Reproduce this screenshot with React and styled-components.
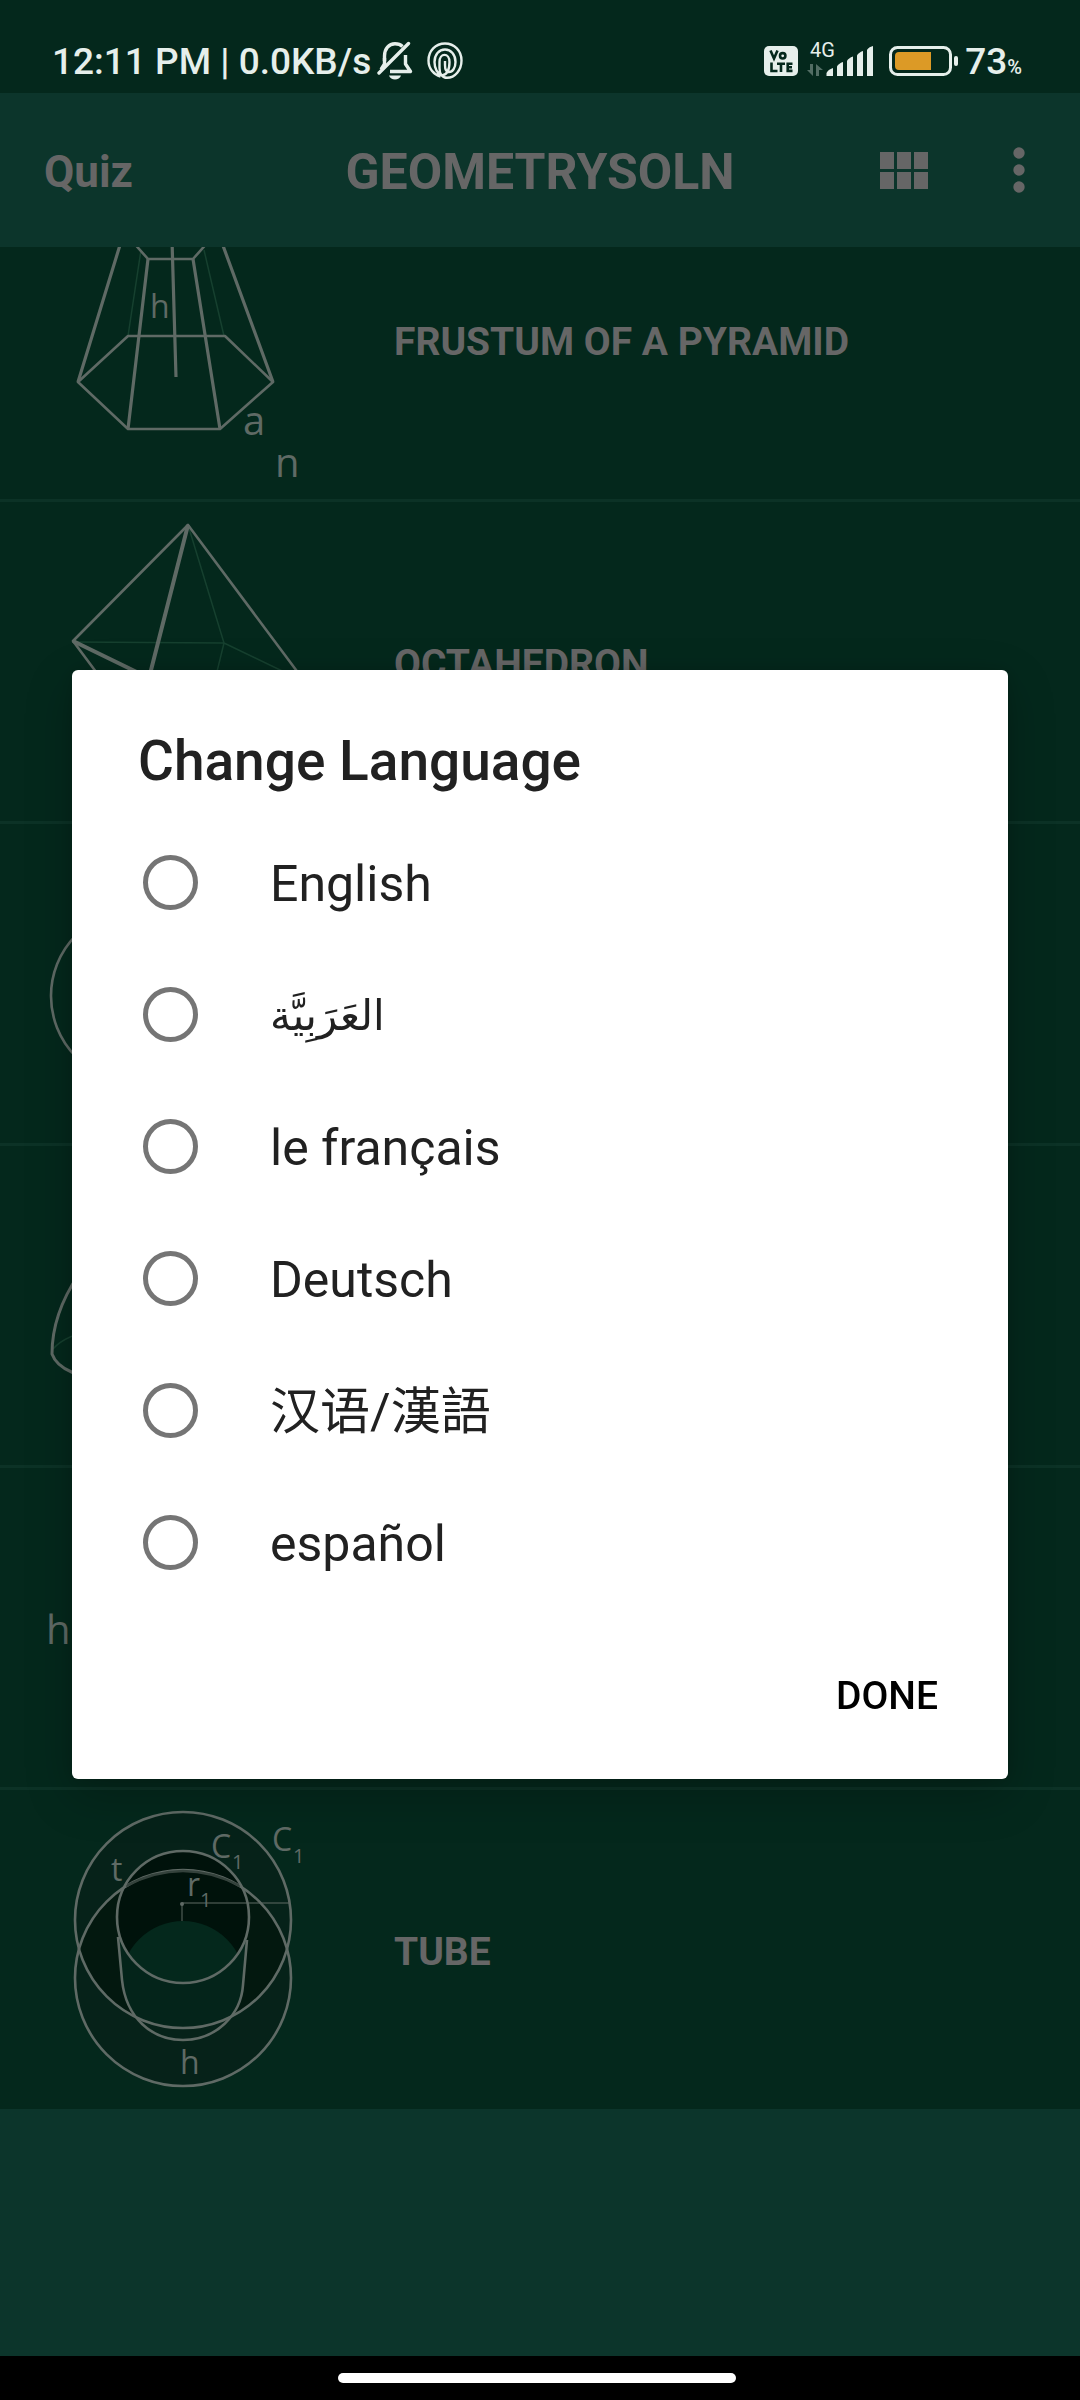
import React from "react";
import styled, { createGlobalStyle } from "styled-components";

const color = {
  board: "#04281c",
  panel: "#0c352b",
  divider: "#0c3226",
  chalk: "#666666",
  line: "#5f6a65",
  faint: "#16402f",
  status: "#e6efeb",
  ink: "#212121",
};

const GlobalStyle = createGlobalStyle`
  * { box-sizing: border-box; }
  body {
    margin: 0;
    background: ${color.panel};
    font-family: Roboto, "Noto Sans CJK SC", "DejaVu Sans", sans-serif;
  }
  button { font-family: inherit; border: 0; background: none; cursor: pointer; }
`;

const Screen = styled.div`
  display: flex;
  flex-direction: column;
  min-height: 100vh;
  background: ${color.panel};
`;

const StatusBar = styled.div`
  position: relative;
  z-index: 2;
  display: flex;
  justify-content: space-between;
  align-items: center;
  height: 93px;
  padding: 28px 58px 0 52px;
  background: ${color.board};
  color: ${color.status};
  font-size: 37px;
  font-weight: 500;
  line-height: 44px;
`;

const StatusGroup = styled.div`
  display: flex;
  align-items: center;
  gap: ${(p) => p.$gap}px;
`;

const StatusText = styled.span`
  padding-top: 3px;
`;

const Percent = styled.span`
  font-size: 20px;
  line-height: 20px;
`;

const Header = styled.header`
  position: relative;
  z-index: 2;
  display: grid;
  grid-template-columns: 1fr auto 1fr;
  align-items: center;
  height: 154px;
  padding: 2px 43px 0;
  background: ${color.panel};
  color: ${color.chalk};
`;

const QuizButton = styled.button`
  justify-self: start;
  padding: 2px 0 0 1px;
  color: inherit;
  font-size: 44px;
  font-weight: 700;
  line-height: 64px;
`;

const AppTitle = styled.h1`
  margin: 0;
  padding-top: 2px;
  font-size: 50px;
  font-weight: 700;
  line-height: 64px;
`;

const HeaderActions = styled.div`
  justify-self: end;
  display: flex;
  align-items: center;
  gap: 73px;
`;

const IconButton = styled.button`
  display: flex;
  padding: 0 0 2px;
  color: inherit;
`;

const ShapeList = styled.ul`
  display: flex;
  flex-direction: column;
  gap: 3px;
  margin: -67px 0 0;
  padding: 0;
  list-style: none;
  background: ${color.divider};
`;

const ShapeRow = styled.li`
  display: flex;
  align-items: center;
  gap: 44px;
  height: 319px;
  background: ${color.board};
  color: ${color.chalk};
`;

const ShapeName = styled.span`
  padding-top: 4px;
  font-size: 39px;
  font-weight: 700;
  line-height: 48px;
`;

const Figure = styled.svg`
  flex: none;
  width: 350px;
  height: 319px;
  fill: none;
  stroke: ${color.line};
  stroke-width: 2.6;
  stroke-linejoin: round;
`;

const FigureLabel = styled.text`
  fill: ${color.line};
  stroke: none;
  font-family: "Open Sans", "Noto Sans", sans-serif;
  font-size: ${(p) => p.$size || 32}px;
`;

const Filler = styled.div`
  flex: 1;
`;

const NavBar = styled.div`
  display: flex;
  justify-content: center;
  align-items: center;
  height: 44px;
  padding-right: 6px;
  background: #000;
`;

const HomeHandle = styled.div`
  width: 37%;
  height: 10px;
  border-radius: 5px;
  background: #fff;
`;

const Overlay = styled.div`
  position: fixed;
  inset: 0;
  z-index: 3;
  display: flex;
  align-items: center;
  padding: 93px 72px 44px;
`;

const Dialog = styled.form`
  flex: 1;
  padding: 59px 22px 17px 66px;
  border-radius: 6px;
  background: #fff;
  color: ${color.ink};
  box-shadow: 0 16px 48px rgba(0, 0, 0, 0.22), 0 0 16px rgba(0, 0, 0, 0.12);
`;

const DialogTitle = styled.h2`
  margin: 0 0 23px;
  font-size: 55px;
  font-weight: 500;
  line-height: 64px;
`;

const Options = styled.div`
  display: flex;
  flex-direction: column;
`;

const Option = styled.label`
  display: flex;
  align-items: center;
  gap: 72px;
  height: 132px;
  padding-left: 5px;
  line-height: 64px;
  cursor: pointer;
`;

const Radio = styled.input`
  appearance: none;
  flex: none;
  width: 55px;
  height: 55px;
  margin: 0;
  border: 5px solid #757575;
  border-radius: 50%;
  &:checked {
    background: radial-gradient(#757575 40%, transparent 44%);
  }
`;

const OptionText = styled.span`
  padding-top: 3px;
  font-size: ${(p) => (p.lang === "ar" ? 42 : 50)}px;
`;

const Actions = styled.div`
  display: flex;
  justify-content: flex-end;
  margin-top: 22px;
`;

const DoneButton = styled.button`
  height: 132px;
  padding: 0 48px;
  color: #000;
  font-size: 39px;
  font-weight: 500;
`;

const BellOff = () => (
  <svg width="36" height="40" viewBox="0 0 36 40" fill="none" stroke="currentColor" strokeWidth="3.4">
    <path d="M7.500 20V15C7.500 7.500 12 2.800 18 2.800C21 2.800 23.500 3.500 25.500 5.500" />
    <path d="M28.500 14V23L33.500 30.500H13" strokeLinejoin="round" />
    <path d="M2 32L31.500 2.500" strokeLinecap="round" />
    <path d="M7.500 17V23L4 28.500" />
    <path d="M12 34.500H24C22.500 39.800 13.500 39.800 12 34.500Z" fill="currentColor" stroke="none" />
  </svg>
);

const Spiral = () => (
  <svg width="36" height="38" viewBox="0 0 36 38" fill="none" stroke="currentColor" strokeWidth="2.400">
    <path d="M13.500 34.500C6.500 32.500 1.500 26.500 1.500 18.500C1.500 9 8.500 1.500 18 1.500S34.500 9 34.500 18.500S28 35.800 20 35.800C15.500 35.800 12.500 32 12.500 26V20C12.500 10.500 22.500 10.500 22.500 20C22.500 27 20.500 32.500 15 33.500C10.500 32 7.500 26.500 7.500 20C7.500 12.500 12 7.500 18 7.500S28.500 12.500 28.500 20C28.500 26 25.500 30 22 30C19.500 30 18 27.500 18 23V19" />
  </svg>
);

const VoLte = () => (
  <svg width="34" height="30" viewBox="0 0 34 30" aria-label="VoLTE">
    <rect width="34" height="30" rx="5" fill="currentColor" />
    <g fill="none" stroke={color.board} strokeWidth="2.600">
      <path d="M6.500 4.500L10 12.500L13.500 4.500M7.500 16.500V25H13.500M13 17.700H21M17 17.700V26M28.500 17.700H23.700V24.900H28.500M23.700 21.300H28" />
      <circle cx="18.700" cy="9.800" r="2.700" />
    </g>
  </svg>
);

const Signal = () => (
  <svg width="68" height="48" viewBox="0 -5 68 48" fill="currentColor">
    <text x="4" y="15" fontSize="20" fontWeight="400" fontFamily="Roboto, sans-serif">4G</text>
    <path d="M7 22V34L1 28H4V22ZM10 34V22L17 28H13V34Z" opacity="0.35" />
    <path d="M20.500 34V31Q22 27.500 27 26V34ZM31 34V24.500Q32.500 21.500 37 20V34ZM41 34V19Q42.500 16 47 14.500V34ZM51 34V13.500Q52.500 10.500 57 9V34ZM61 34V8Q62.500 5 67 4V34Z" />
  </svg>
);

const Battery = () => (
  <svg width="71" height="32" viewBox="0 0 71 32" fill="none">
    <rect x="2.500" y="2.500" width="60" height="27" rx="7" stroke="currentColor" strokeWidth="3" />
    <path d="M11 7H43V25H11Q7 25 7 21V11Q7 7 11 7Z" fill="#dc9a26" />
    <rect x="66" y="11" width="4" height="10" rx="2" fill="currentColor" />
  </svg>
);

const GridIcon = () => (
  <svg width="48" height="37" viewBox="0 0 48 37" fill="currentColor">
    <path d="M0 0H14V17H0ZM17 0H31V17H17ZM34 0H48V17H34ZM0 20H14V37H0ZM17 20H31V37H17ZM34 20H48V37H34Z" />
  </svg>
);

const MoreIcon = () => (
  <svg width="36" height="46" viewBox="0 0 36 46" fill="currentColor">
    <circle cx="18" cy="6" r="5.700" />
    <circle cx="18" cy="23" r="5.700" />
    <circle cx="18" cy="40" r="5.700" />
  </svg>
);

const Frustum = () => (
  <Figure viewBox="0 0 350 319">
    <path stroke={color.faint} strokeWidth="1.500" d="M141 70L128 156M204 70L224 156" />
    <path d="M78 202L128 249H220L273 202L225 156H128ZM124 52L148 79H193L217 52" />
    <path strokeWidth="3.200" d="M124 52L78 202M148 79L128 249M193 79L220 249M218 52L273 202M172 60L176 197" />
    <FigureLabel x="150" y="138">h</FigureLabel>
    <FigureLabel x="243" y="255" $size={40}>a</FigureLabel>
    <FigureLabel x="275" y="297" $size={40}>n</FigureLabel>
  </Figure>
);

const Octahedron = () => (
  <Figure viewBox="0 0 350 319">
    <path stroke={color.faint} strokeWidth="1.500" d="M73 140L224 141L188 23M224 141L305 180M224 141L187 292" />
    <path d="M73 139L188 23L305 180L187 292ZM149 176L305 180" />
    <path strokeWidth="4" d="M73 139L149 176L188 23M149 176L187 292" />
  </Figure>
);

const Sphere = () => (
  <Figure viewBox="0 0 350 319">
    <circle cx="137" cy="172" r="86" />
  </Figure>
);

const Cone = () => (
  <Figure viewBox="0 0 350 319">
    <path stroke={color.faint} strokeWidth="1.500" d="M53 203Q66 188 100 183" />
    <path strokeWidth="3" d="M137 70C95 100 52 150 52 208C57 222 72 232 137 240C190 236 222 222 222 205C222 150 180 100 137 70Z" />
  </Figure>
);

const Prism = () => (
  <Figure viewBox="0 0 350 319">
    <FigureLabel x="46" y="176" $size={40}>h</FigureLabel>
    <path d="M90 60H220V260H90Z" />
  </Figure>
);

const Tube = () => (
  <Figure viewBox="0 0 350 319">
    <defs>
      <clipPath id="upper"><circle cx="183" cy="130" r="107" /></clipPath>
      <clipPath id="bore"><circle cx="183" cy="127" r="66" /></clipPath>
    </defs>
    <g stroke="none">
      <circle cx="183" cy="130" r="108" fill="#062219" />
      <circle cx="183" cy="188" r="108" fill="#062219" />
      <circle cx="183" cy="188" r="108" fill="#03180f" clipPath="url(#upper)" />
      <path d="M118 147L122 190Q126 215 137 228Q183 248 229 228Q242 210 243 195L247 150Z" fill="#04241a" />
      <circle cx="183" cy="127" r="66" fill="#00120b" />
      <circle cx="183" cy="193" r="62" fill={color.board} clipPath="url(#bore)" />
    </g>
    <circle cx="183" cy="130" r="108" />
    <circle cx="183" cy="188" r="108" />
    <path stroke="#34423c" d="M126 96Q183 66 240 96" />
    <circle cx="183" cy="127" r="66" />
    <path d="M118 147L122 190C126 228 152 250 183 250C216 250 241 225 243 195L247 150" />
    <path strokeWidth="1" d="M182 131V113H290" />
    <circle cx="182" cy="114" r="2" fill={color.line} stroke="none" />
    <FigureLabel x="111" y="91">t</FigureLabel>
    <FigureLabel x="211" y="68">C</FigureLabel>
    <FigureLabel x="232" y="79" $size={20}>1</FigureLabel>
    <FigureLabel x="272" y="61">C</FigureLabel>
    <FigureLabel x="293" y="73" $size={20}>1</FigureLabel>
    <FigureLabel x="187" y="106">r</FigureLabel>
    <FigureLabel x="200" y="117" $size={20}>1</FigureLabel>
    <FigureLabel x="180" y="284">h</FigureLabel>
  </Figure>
);

const shapes = [
  { name: "FRUSTUM OF A PYRAMID", Drawing: Frustum },
  { name: "OCTAHEDRON", Drawing: Octahedron },
  { name: "", Drawing: Sphere },
  { name: "", Drawing: Cone },
  { name: "", Drawing: Prism },
  { name: "TUBE", Drawing: Tube },
];

const languages = [
  { code: "en", label: "English" },
  { code: "ar", label: "العَرَبِيَّة" },
  { code: "fr", label: "le français" },
  { code: "de", label: "Deutsch" },
  { code: "zh", label: "汉语/漢語" },
  { code: "es", label: "español" },
];

export default function App() {
  return (
    <Screen>
      <GlobalStyle />
      <StatusBar>
        <StatusGroup $gap={6}>
          <StatusText>12:11 PM | 0.0KB/s</StatusText>
          <StatusGroup $gap={14}>
            <BellOff />
            <Spiral />
          </StatusGroup>
        </StatusGroup>
        <StatusGroup $gap={6}>
          <StatusGroup $gap={14}>
            <StatusGroup $gap={8}>
              <VoLte />
              <Signal />
            </StatusGroup>
            <Battery />
          </StatusGroup>
          <StatusText>73<Percent>%</Percent></StatusText>
        </StatusGroup>
      </StatusBar>
      <Header>
        <QuizButton type="button">Quiz</QuizButton>
        <AppTitle>GEOMETRYSOLN</AppTitle>
        <HeaderActions>
          <IconButton type="button" aria-label="Grid view"><GridIcon /></IconButton>
          <IconButton type="button" aria-label="More options"><MoreIcon /></IconButton>
        </HeaderActions>
      </Header>
      <ShapeList>
        {shapes.map(({ name, Drawing }, i) => (
          <ShapeRow key={i}>
            <Drawing />
            <ShapeName>{name}</ShapeName>
          </ShapeRow>
        ))}
      </ShapeList>
      <Filler />
      <NavBar>
        <HomeHandle />
      </NavBar>
      <Overlay>
        <Dialog role="dialog" aria-labelledby="dialog-title" onSubmit={(e) => e.preventDefault()}>
          <DialogTitle id="dialog-title">Change Language</DialogTitle>
          <Options role="radiogroup" aria-labelledby="dialog-title">
            {languages.map(({ code, label }) => (
              <Option key={code} htmlFor={`lang-${code}`}>
                <Radio type="radio" name="language" id={`lang-${code}`} value={code} />
                <OptionText lang={code}>{label}</OptionText>
              </Option>
            ))}
          </Options>
          <Actions>
            <DoneButton type="submit">DONE</DoneButton>
          </Actions>
        </Dialog>
      </Overlay>
    </Screen>
  );
}
